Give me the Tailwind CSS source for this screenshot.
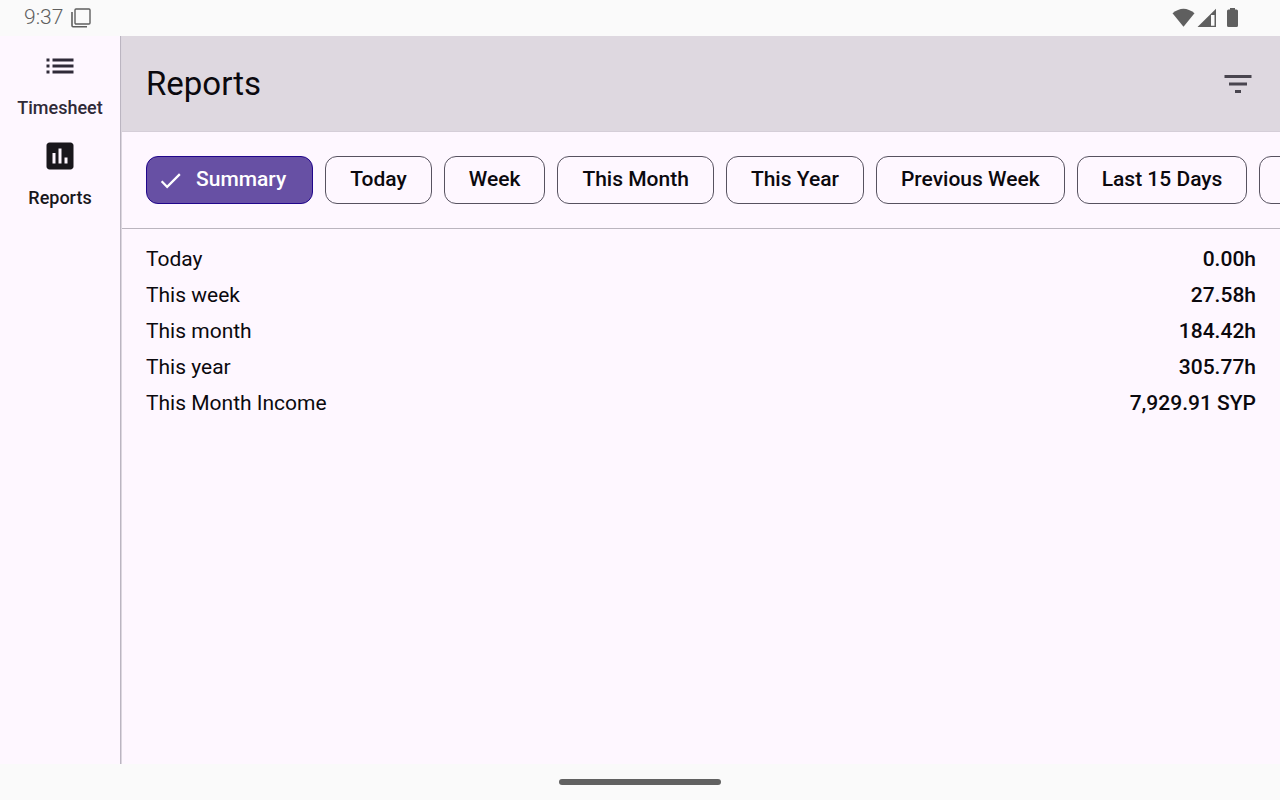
<!DOCTYPE html>
<html lang="en">
<head>
    <meta charset="UTF-8">
    <meta name="viewport" content="width=device-width, initial-scale=1.0">
    <title>Reports</title>
    <script src="https://cdn.jsdelivr.net/npm/@tailwindcss/browser@4"></script>
</head>
<body class="flex min-h-screen flex-col overflow-x-hidden bg-[#fef7ff] font-['Roboto',sans-serif] text-[#0b090e]">
    <!-- Status Bar -->
    <div class="flex h-9 items-center justify-between bg-[#fafafa] pr-10 pl-6 text-[#5f5f5f]">
        <div class="flex items-center gap-2">
            <span class="text-[21px] font-light">9:37</span>
            <svg class="size-5" viewBox="0 0 20 20" fill="none" stroke="currentColor" aria-hidden="true">
                <rect x="4" y="1" width="15" height="15" rx="1" stroke-width="1.400"/>
                <path d="M1 4v13.500q0 1.200 1 1.200H16" stroke-width="1.600"/>
            </svg>
        </div>
        <svg class="h-5 w-[68px]" viewBox="0 0 68 20" fill="currentColor" aria-hidden="true">
            <path d="M.5 5.300Q11.500-3.700 22.500 5.300L11.500 18.800Z"/>
            <path fill-rule="evenodd" d="M44 .8V19H25.500ZM42.500 7V17.700H39V7Z"/>
            <path d="M58 1V0h5v1.500h1.500q1.500 0 1.500 1.500v14.500q0 1.500-1.500 1.500h-8q-1.500 0-1.500-1.500V3q0-1.500 1.500-1.500H58Z"/>
        </svg>
    </div>

    <div class="flex flex-1">
        <!-- Navigation Rail -->
        <nav class="flex w-[121px] shrink-0 flex-col items-center gap-3 border-r border-[#bbb5c1] pt-3 text-[18px] leading-6 font-medium">
            <a href="#timesheet" class="flex flex-col items-center gap-3 pb-[6px] text-[#2f2a38]">
                <svg class="size-9" viewBox="0 0 24 24" fill="currentColor" aria-hidden="true"><path d="M3 13h2v-2H3v2zm0 4h2v-2H3v2zm0-8h2V7H3v2zm4 4h14v-2H7v2zm0 4h14v-2H7v2zM7 7v2h14V7H7z"/></svg>
                Timesheet
            </a>
            <a href="#reports" aria-current="page" class="flex flex-col items-center gap-3 text-[#19171c]">
                <svg class="size-9" viewBox="0 0 24 24" fill="currentColor" aria-hidden="true"><path d="M19 3H5c-1.100 0-2 .9-2 2v14c0 1.100.9 2 2 2h14c1.100 0 2-.9 2-2V5c0-1.100-.9-2-2-2zM9 17H7v-7h2v7zm4 0h-2V7h2v10zm4 0h-2v-4h2v4z"/></svg>
                Reports
            </a>
        </nav>

        <main class="min-w-0 flex-1 border-l border-[#dcd6df]">
            <!-- Top Bar -->
            <header class="flex h-24 items-center justify-between border-b border-[#d5ced8] bg-[#ded8e0] px-6">
                <h1 class="text-[33px]">Reports</h1>
                <button type="button" aria-label="Filter" class="text-[#49454f]">
                    <svg class="size-9" viewBox="0 0 24 24" fill="currentColor" aria-hidden="true"><path d="M10 18h4v-2h-4v2zM3 6v2h18V6H3zm3 7h12v-2H6v2z"/></svg>
                </button>
            </header>

            <!-- Report Period Chips -->
            <div class="flex gap-3 overflow-hidden border-b border-[#bbb5bf] p-6 text-[21px] font-medium whitespace-nowrap">
                <button type="button" aria-pressed="true" class="flex h-12 shrink-0 items-center gap-3 rounded-xl border border-[#21068c] bg-[#6750a4] pr-[26px] pl-[10px] text-white">
                    <svg class="size-[27px]" viewBox="0 0 24 24" fill="currentColor" aria-hidden="true"><path d="M9 16.170 4.830 12l-1.420 1.410L9 19 21 7l-1.410-1.410z"/></svg>
                    Summary
                </button>
                <button type="button" class="h-12 shrink-0 rounded-xl border border-[#575260] px-6">Today</button>
                <button type="button" class="h-12 shrink-0 rounded-xl border border-[#575260] px-6">Week</button>
                <button type="button" class="h-12 shrink-0 rounded-xl border border-[#575260] px-6">This Month</button>
                <button type="button" class="h-12 shrink-0 rounded-xl border border-[#575260] px-6">This Year</button>
                <button type="button" class="h-12 shrink-0 rounded-xl border border-[#575260] px-6">Previous Week</button>
                <button type="button" class="h-12 shrink-0 rounded-xl border border-[#575260] px-6">Last 15 Days</button>
                <button type="button" aria-label="More" class="h-12 w-36 shrink-0 rounded-xl border border-[#575260]"></button>
            </div>

            <!-- Summary -->
            <div class="px-6 py-3">
                <table class="w-full text-[21px] leading-9">
                    <tbody>
                        <tr>
                            <th scope="row" class="p-0 text-left font-normal">Today</th>
                            <td class="p-0 text-right font-medium">0.00h</td>
                        </tr>
                        <tr>
                            <th scope="row" class="p-0 text-left font-normal">This week</th>
                            <td class="p-0 text-right font-medium">27.58h</td>
                        </tr>
                        <tr>
                            <th scope="row" class="p-0 text-left font-normal">This month</th>
                            <td class="p-0 text-right font-medium">184.42h</td>
                        </tr>
                        <tr>
                            <th scope="row" class="p-0 text-left font-normal">This year</th>
                            <td class="p-0 text-right font-medium">305.77h</td>
                        </tr>
                        <tr>
                            <th scope="row" class="p-0 text-left font-normal">This Month Income</th>
                            <td class="p-0 text-right font-medium">7,929.91 SYP</td>
                        </tr>
                    </tbody>
                </table>
            </div>
        </main>
    </div>

    <!-- Gesture Bar -->
    <div class="flex h-9 items-center justify-center bg-[#fafafa]">
        <div class="h-[6px] w-[162px] rounded-full bg-[#616161]"></div>
    </div>
</body>
</html>
